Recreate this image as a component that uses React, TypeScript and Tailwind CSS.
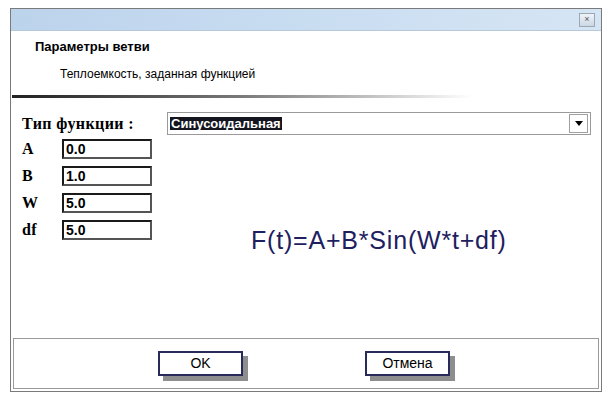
import React from "react";

const labelCls = "font-['Liberation_Serif',serif] font-bold text-[16px] tracking-[0.4px] text-black leading-none";

function Field({ label, value }: { label: string; value: string }) {
  return (
    <div className="flex items-center h-[20px]">
      <div className={`${labelCls} w-[40px]`}>{label}</div>
      <div className="w-[90px] h-[20px] border-2 border-[#1a1a1a] border-r-[#555] border-b-[#555] flex items-center pl-[2px] font-['Liberation_Sans',sans-serif] font-bold text-[14px] text-black">
        {value}
      </div>
    </div>
  );
}

export default function App() {
  return (
    <div className="w-[612px] h-[400px] bg-white pt-[8px] pl-[10px] font-['Liberation_Sans',sans-serif]">
      <div className="w-[592px] h-[384px] border border-[#7a7a7a] flex flex-col bg-white">
        {/* title bar */}
        <div className="h-[22px] bg-gradient-to-r from-[#bcd3ec] via-[#c9ddf1] to-[#d6e5f4] flex items-center justify-end pr-[6px] border-b border-[#b5c8dc]">
          <div className="w-[16px] h-[14px] border border-[#9aa8b6] bg-gradient-to-b from-[#eef3f8] to-[#cdd8e3] flex items-center justify-center text-[9px] leading-none text-[#556]">
            ×
          </div>
        </div>
        {/* header */}
        <div className="h-[64px] flex flex-col pl-[24px] pt-[8px]">
          <div className="font-bold text-[13px] text-black leading-[16px]">Параметры ветви</div>
          <div className="text-[12px] text-black leading-[16px] mt-[11px] pl-[25px]">
            Теплоемкость, заданная функцией
          </div>
        </div>
        {/* separator */}
        <div className="h-[3px] w-[460px] ml-[1px] bg-gradient-to-r from-[#222222] via-[#7a7a7a] to-white" />
        {/* body */}
        <div className="flex-1 flex flex-col pl-[11px] pr-[10px] pt-[14px]">
          <div className="flex items-center h-[23px]">
            <div className={`${labelCls} w-[145px]`}>Тип функции :</div>
            <div className="flex-1 h-[23px] border border-[#9a9a9a] flex items-center pl-[2px] pr-[2px] justify-between">
              <span className="bg-[#151520] text-white font-bold text-[13px] leading-[13px] px-[1px] py-[0px]">
                Синусоидальная
              </span>
              <div className="w-[19px] h-[19px] border border-[#a0a0a0] flex items-center justify-center bg-white">
                <svg width="8" height="5" viewBox="0 0 8 5">
                  <polygon points="0,0 8,0 4,5" fill="#000" />
                </svg>
              </div>
            </div>
          </div>
          <div className="flex mt-[4px]">
            <div className="flex flex-col gap-[7px]">
              <Field label="A" value="0.0" />
              <Field label="B" value="1.0" />
              <Field label="W" value="5.0" />
              <Field label="df" value="5.0" />
            </div>
            <div className="flex-1 flex items-start pl-[99px] pt-[87px]">
              <div className="font-['Liberation_Sans',sans-serif] text-[25px] tracking-[0.8px] leading-[28px] text-[#1e2060]">
                F(t)=A+B*Sin(W*t+df)
              </div>
            </div>
          </div>
        </div>
        {/* footer */}
        <div className="h-[51px] mx-[2px] mb-[2px] border border-[#9a9a9a] flex items-center">
          <div className="ml-[144px] w-[85px] h-[25px] border-2 border-[#2a2a5a] bg-white shadow-[5px_5px_0_#8e8e8e] flex items-center justify-center text-[14px] font-['Liberation_Sans_Narrow','Liberation_Sans',sans-serif] text-black">
            OK
          </div>
          <div className="ml-[122px] w-[85px] h-[25px] border-2 border-[#2a2a5a] bg-white shadow-[5px_5px_0_#8e8e8e] flex items-center justify-center text-[14px] font-['Liberation_Sans_Narrow','Liberation_Sans',sans-serif] text-black">
            Отмена
          </div>
        </div>
      </div>
    </div>
  );
}
